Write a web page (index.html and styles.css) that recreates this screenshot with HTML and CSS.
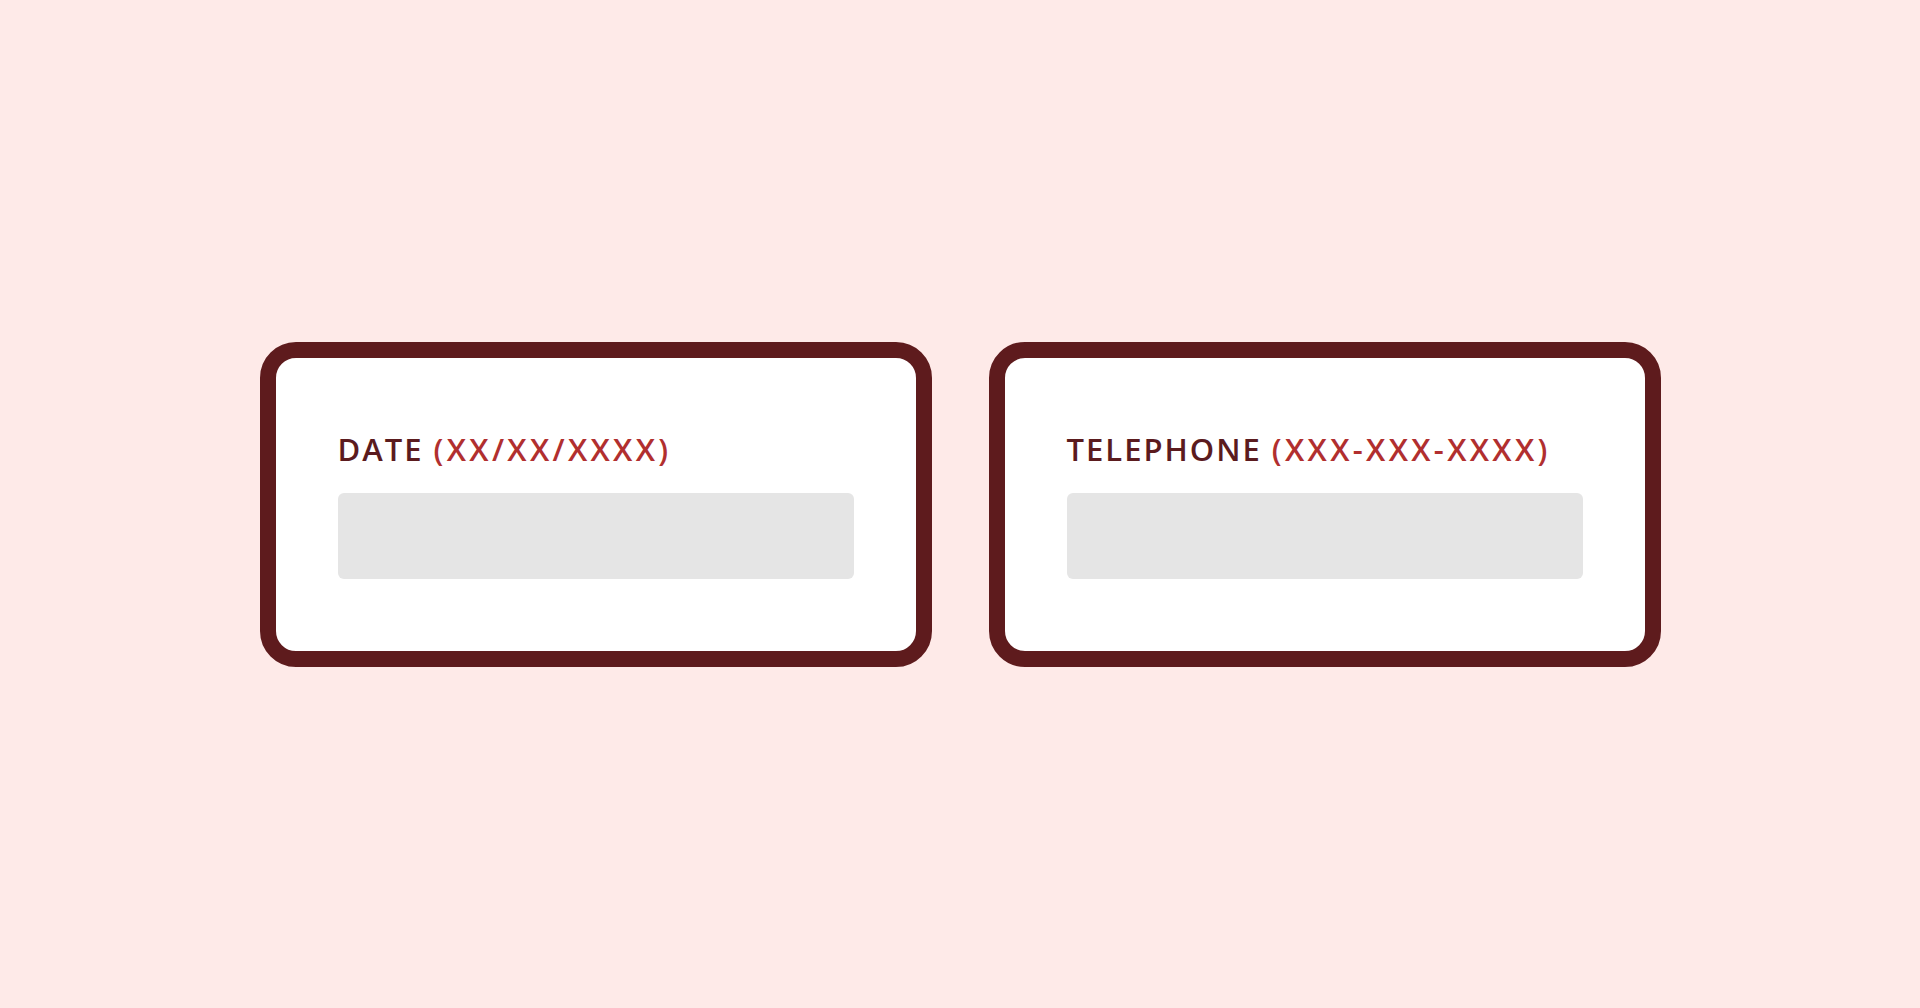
FILE: index.html
```html
<!DOCTYPE html>
<html lang="en">
<head>
  <meta charset="UTF-8" />
  <meta name="viewport" content="width=device-width, initial-scale=1.0"/>
  <title>Input Formats</title>
  <link rel="stylesheet" href="styles.css">
</head>
<body>

  <div class="field-row">
    <!-- Date field -->
    <div class="field-card">
      <label class="field-label" for="date">DATE <span class="format">(XX/XX/XXXX)</span></label>
      <input class="field-input" id="date" type="text">
    </div>

    <!-- Phone field -->
    <div class="field-card">
      <label class="field-label" for="phone">TELEPHONE <span class="format">(XXX-XXX-XXXX)</span></label>
      <input class="field-input" id="phone" type="text">
    </div>
  </div>

</body>
</html>
```

FILE: styles.css
```css
* { box-sizing: border-box; margin: 0; padding: 0; }

body {
  background: #feeae8;
  min-height: 100vh;
  display: flex;
  justify-content: center;
  align-items: center;
  font-family: "Open Sans", sans-serif;
}

.field-row {
  display: flex;
  gap: 57px;
}

.field-card {
  width: 672px;
  height: 325px;
  background: #ffffff;
  border: 16px solid #5e1b1d;
  border-radius: 36px;
  padding: 73px 62px 0;
  display: flex;
  flex-direction: column;
  gap: 26px;
}

.field-label {
  font-size: 31px;
  line-height: 36px;
  font-weight: 600;
  letter-spacing: 2px;
  color: #5b1b1e;
  white-space: nowrap;
}

.field-label .format {
  color: #b12f2f;
  letter-spacing: 3.3px;
}

.field-input {
  height: 86px;
  width: 100%;
  background: #e5e5e5;
  border: none;
  border-radius: 6px;
  outline: none;
}
```
